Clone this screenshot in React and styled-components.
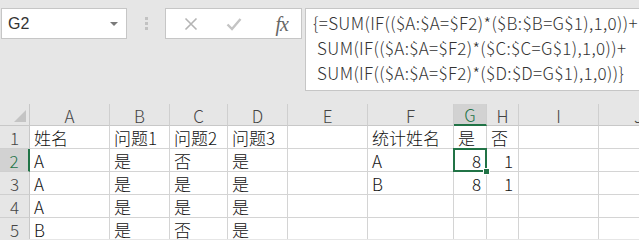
import styled, { createGlobalStyle } from "styled-components";

const GlobalStyle = createGlobalStyle`
  html, body { margin: 0; padding: 0; background: #e6e6e6; }
  body { font-family: "Noto Sans CJK SC", "Liberation Sans", sans-serif; overflow: hidden; }
`;

const columns = [
  { key: "A", width: 80 },
  { key: "B", width: 60 },
  { key: "C", width: 58 },
  { key: "D", width: 60 },
  { key: "E", width: 80 },
  { key: "F", width: 86 },
  { key: "G", width: 33 },
  { key: "H", width: 32 },
  { key: "I", width: 80 },
  { key: "J", width: 80 },
];

const rows = [
  { A: "姓名", B: "问题1", C: "问题2", D: "问题3", F: "统计姓名", G: "是", H: "否" },
  { A: "A", B: "是", C: "否", D: "是", F: "A", G: 8, H: 1 },
  { A: "A", B: "是", C: "是", D: "是", F: "B", G: 8, H: 1 },
  { A: "A", B: "是", C: "是", D: "是" },
  { A: "B", B: "是", C: "否", D: "是" },
];

const formula = [
  "{=SUM(IF(($A:$A=$F2)*($B:$B=G$1),1,0))+",
  " SUM(IF(($A:$A=$F2)*($C:$C=G$1),1,0))+",
  " SUM(IF(($A:$A=$F2)*($D:$D=G$1),1,0))}",
];

export default function App() {
  return (
    <>
      <GlobalStyle />
      <Page>
        <Toolbar>
          <NameBox>
            <span>G2</span>
            <Caret />
          </NameBox>
          <Grip>
            <i /><i /><i />
          </Grip>
          <FxButtons>
            <svg width="14" height="14" viewBox="0 0 14 14">
              <path d="M1.5 1.5 L12.5 12.5 M12.5 1.5 L1.5 12.5" stroke="#b4b4b4" strokeWidth="1.6" fill="none" />
            </svg>
            <svg width="16" height="14" viewBox="0 0 16 14">
              <path d="M1.5 7.5 L6 12 L14.5 2" stroke="#c4c4c4" strokeWidth="2.4" fill="none" />
            </svg>
            <Fx>fx</Fx>
          </FxButtons>
          <FormulaBox>
            {formula.map((l, i) => (
              <FormulaLine key={i}>{l}</FormulaLine>
            ))}
          </FormulaBox>
        </Toolbar>

        <Sheet $cols={columns.map((c) => c.width + "px").join(" ")}>
          <Corner>
            <Triangle />
          </Corner>
          {columns.map((c) => (
            <ColHead key={c.key} $active={c.key === "G"}>
              {c.key}
            </ColHead>
          ))}
          {rows.map((r, ri) => (
            <Row key={ri} r={r} n={ri + 1} />
          ))}
        </Sheet>
      </Page>
    </>
  );
}

function Row({ r, n }) {
  return (
    <>
      <RowHead $active={n === 2}>{n}</RowHead>
      {columns.map((c) => {
        const v = r[c.key];
        return (
          <Cell
            key={c.key}
            $num={typeof v === "number"}
            $selected={n === 2 && c.key === "G"}
          >
            {v}
          </Cell>
        );
      })}
    </>
  );
}

const Page = styled.div`
  width: 639px;
  height: 239px;
  overflow: hidden;
  background: #e6e6e6;
`;

const Toolbar = styled.div`
  display: flex;
  align-items: flex-start;
  padding: 8px 0 0 1px;
  height: 96px;
  box-sizing: border-box;
`;

const NameBox = styled.div`
  width: 126px;
  height: 31px;
  box-sizing: border-box;
  background: #fff;
  border: 1px solid #c6c6c6;
  display: flex;
  align-items: center;
  justify-content: space-between;
  padding: 0 8px 0 6px;
  font-family: "Liberation Sans", "Noto Sans", sans-serif;
  font-size: 16px;
  color: #333;
`;

const Caret = styled.span`
  width: 0;
  height: 0;
  border-left: 4px solid transparent;
  border-right: 4px solid transparent;
  border-top: 4px solid #7a7a7a;
`;

const Grip = styled.div`
  width: 38px;
  height: 31px;
  display: flex;
  flex-direction: column;
  align-items: center;
  justify-content: center;
  gap: 2px;
  i {
    width: 3px;
    height: 3px;
    background: #c2c2c2;
  }
`;

const FxButtons = styled.div`
  width: 137px;
  height: 31px;
  box-sizing: border-box;
  background: #fff;
  border: 1px solid #c6c6c6;
  display: flex;
  align-items: center;
  padding: 0 13px 0 18px;
  gap: 26px;
  svg:nth-child(2) { margin-left: 2px; }
`;

const Fx = styled.span`
  margin-left: auto;
  font-family: "Liberation Serif", serif;
  font-style: italic;
  font-size: 20px;
  color: #666;
  line-height: 1;
  letter-spacing: -1px;
`;

const FormulaBox = styled.div`
  flex: 1;
  margin-left: 3px;
  margin-right: -4px;
  height: 83px;
  box-sizing: border-box;
  background: #fff;
  border: 1px solid #c6c6c6;
  padding: 1px 0 0 7px;
`;

const FormulaLine = styled.div`
  font-family: "Noto Sans CJK SC", "Liberation Sans", sans-serif;
  font-weight: 300;
  font-size: 17px;
  letter-spacing: 0.35px;
  line-height: 25px;
  color: #333;
  white-space: pre;
`;

const Sheet = styled.div`
  display: grid;
  grid-template-columns: 30px ${(p) => p.$cols};
  grid-template-rows: 22px repeat(5, 23px);
  margin-top: 8px;
  background: #fff;
  font-size: 17px;
  font-weight: 300;
  color: #111;
`;

const HeadBase = styled.div`
  box-sizing: border-box;
  background: #e6e6e6;
  display: flex;
  align-items: center;
  justify-content: center;
  color: #444;
  font-size: 17px;
  font-weight: 300;
`;

const Corner = styled(HeadBase)`
  position: relative;
  border-right: 1px solid #c8c8c8;
  border-bottom: 1px solid #c8c8c8;
`;

const Triangle = styled.span`
  position: absolute;
  right: 3px;
  bottom: 3px;
  width: 0;
  height: 0;
  border-left: 12px solid transparent;
  border-bottom: 12px solid #c4c4c4;
`;

const ColHead = styled(HeadBase)`
  border-right: 1px solid #cfcfcf;
  border-bottom: ${(p) => (p.$active ? "2px solid #217346" : "1px solid #c8c8c8")};
  background: ${(p) => (p.$active ? "#d2d2d2" : "#e6e6e6")};
  color: ${(p) => (p.$active ? "#217346" : "#444")};
  padding-top: 1px;
`;

const RowHead = styled(HeadBase)`
  border-bottom: 1px solid #cfcfcf;
  border-right: ${(p) => (p.$active ? "2px solid #217346" : "1px solid #c8c8c8")};
  background: ${(p) => (p.$active ? "#d2d2d2" : "#e6e6e6")};
  color: ${(p) => (p.$active ? "#217346" : "#444")};
`;

const Cell = styled.div`
  position: relative;
  box-sizing: border-box;
  border-right: 1px solid #d4d4d4;
  border-bottom: 1px solid #d4d4d4;
  display: flex;
  align-items: center;
  justify-content: ${(p) => (p.$num ? "flex-end" : "flex-start")};
  padding: 0 ${(p) => (p.$num ? "5px" : "0")} 0 ${(p) => (p.$num ? "0" : "4px")};
  white-space: nowrap;
  line-height: 1;

  ${(p) =>
    p.$selected &&
    `
    &::after {
      content: "";
      position: absolute;
      left: -1px;
      top: -1px;
      right: -1px;
      bottom: -1px;
      border: 2px solid #217346;
    }
    &::before {
      content: "";
      position: absolute;
      right: -4px;
      bottom: -4px;
      width: 5px;
      height: 5px;
      background: #217346;
      border: 1px solid #fff;
      z-index: 2;
    }
  `}
`;
